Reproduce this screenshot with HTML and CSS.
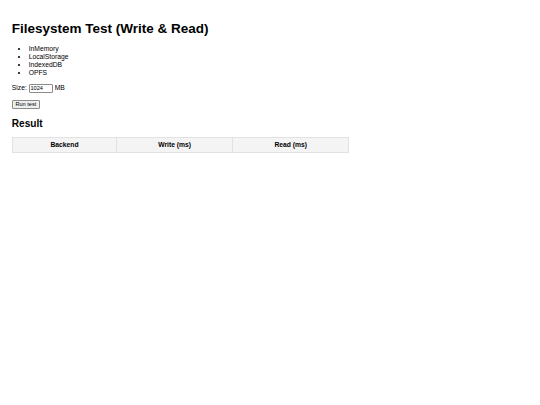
FILE: index.html
```html
<!DOCTYPE html>
<html lang="en">
<head>
<meta charset="utf-8">
<title>Filesystem Test</title>
<link rel="stylesheet" href="styles.css">
</head>
<body>
<h1 class="title">Filesystem Test (Write &amp; Read)</h1>
<ul class="backends">
  <li>InMemory</li>
  <li>LocalStorage</li>
  <li>IndexedDB</li>
  <li>OPFS</li>
</ul>
<p class="row">Size: <input class="size-input" type="text" value="1024"> MB</p>
<p class="row"><button class="run-btn">Run test</button></p>
<h2 class="subtitle">Result</h2>
<table class="result-table">
  <thead>
    <tr><th class="c1">Backend</th><th class="c2">Write (ms)</th><th class="c3">Read (ms)</th></tr>
  </thead>
  <tbody></tbody>
</table>
</body>
</html>
```
FILE: styles.css
```css
body {
  margin: 0;
  padding: 11.8px;
  font-family: "Liberation Sans", Arial, sans-serif;
  font-size: 6.75px;
  line-height: 7.76px;
  color: #000;
  background: #fff;
}
.title {
  font-size: 13.5px;
  line-height: 15.5px;
  font-weight: bold;
  margin: 9.05px 0;
}
.backends {
  margin: 9.05px 0 5px;
  padding-left: 16.9px;
}
.row {
  margin: 6.75px 0;
  display: flex;
  align-items: center;
  gap: 1.7px;
  height: 9.7px;
}
.size-input {
  box-sizing: border-box;
  width: 24.5px;
  height: 9px;
  padding: 0 1px;
  margin: 0;
  border: 1px solid #8a8a8a;
  border-radius: 1px;
  font-family: "Liberation Sans", Arial, sans-serif;
  font-size: 5.6px;
  line-height: 7px;
  color: #000;
  background: #fff;
}
.run-btn {
  box-sizing: border-box;
  height: 9px;
  width: 28.2px;
  padding: 0;
  margin: 0;
  border: 1px solid #8a8a8a;
  border-radius: 1px;
  background: #efefef;
  font-family: "Liberation Sans", Arial, sans-serif;
  font-size: 5.6px;
  line-height: 7px;
  color: #000;
}
.subtitle {
  font-size: 10.1px;
  line-height: 11.6px;
  font-weight: bold;
  margin: 8.4px 0 7.4px;
}
.result-table {
  width: 337.5px;
  border-collapse: collapse;
}
.result-table th {
  padding: 3.4px;
  border: 1px solid #e2e2e2;
  background: #f4f4f4;
  font-weight: bold;
  text-align: center;
  line-height: 7.76px;
}
.c1 { width: 103px; }
.c2 { width: 117px; }
.c3 { width: 117px; }
```
